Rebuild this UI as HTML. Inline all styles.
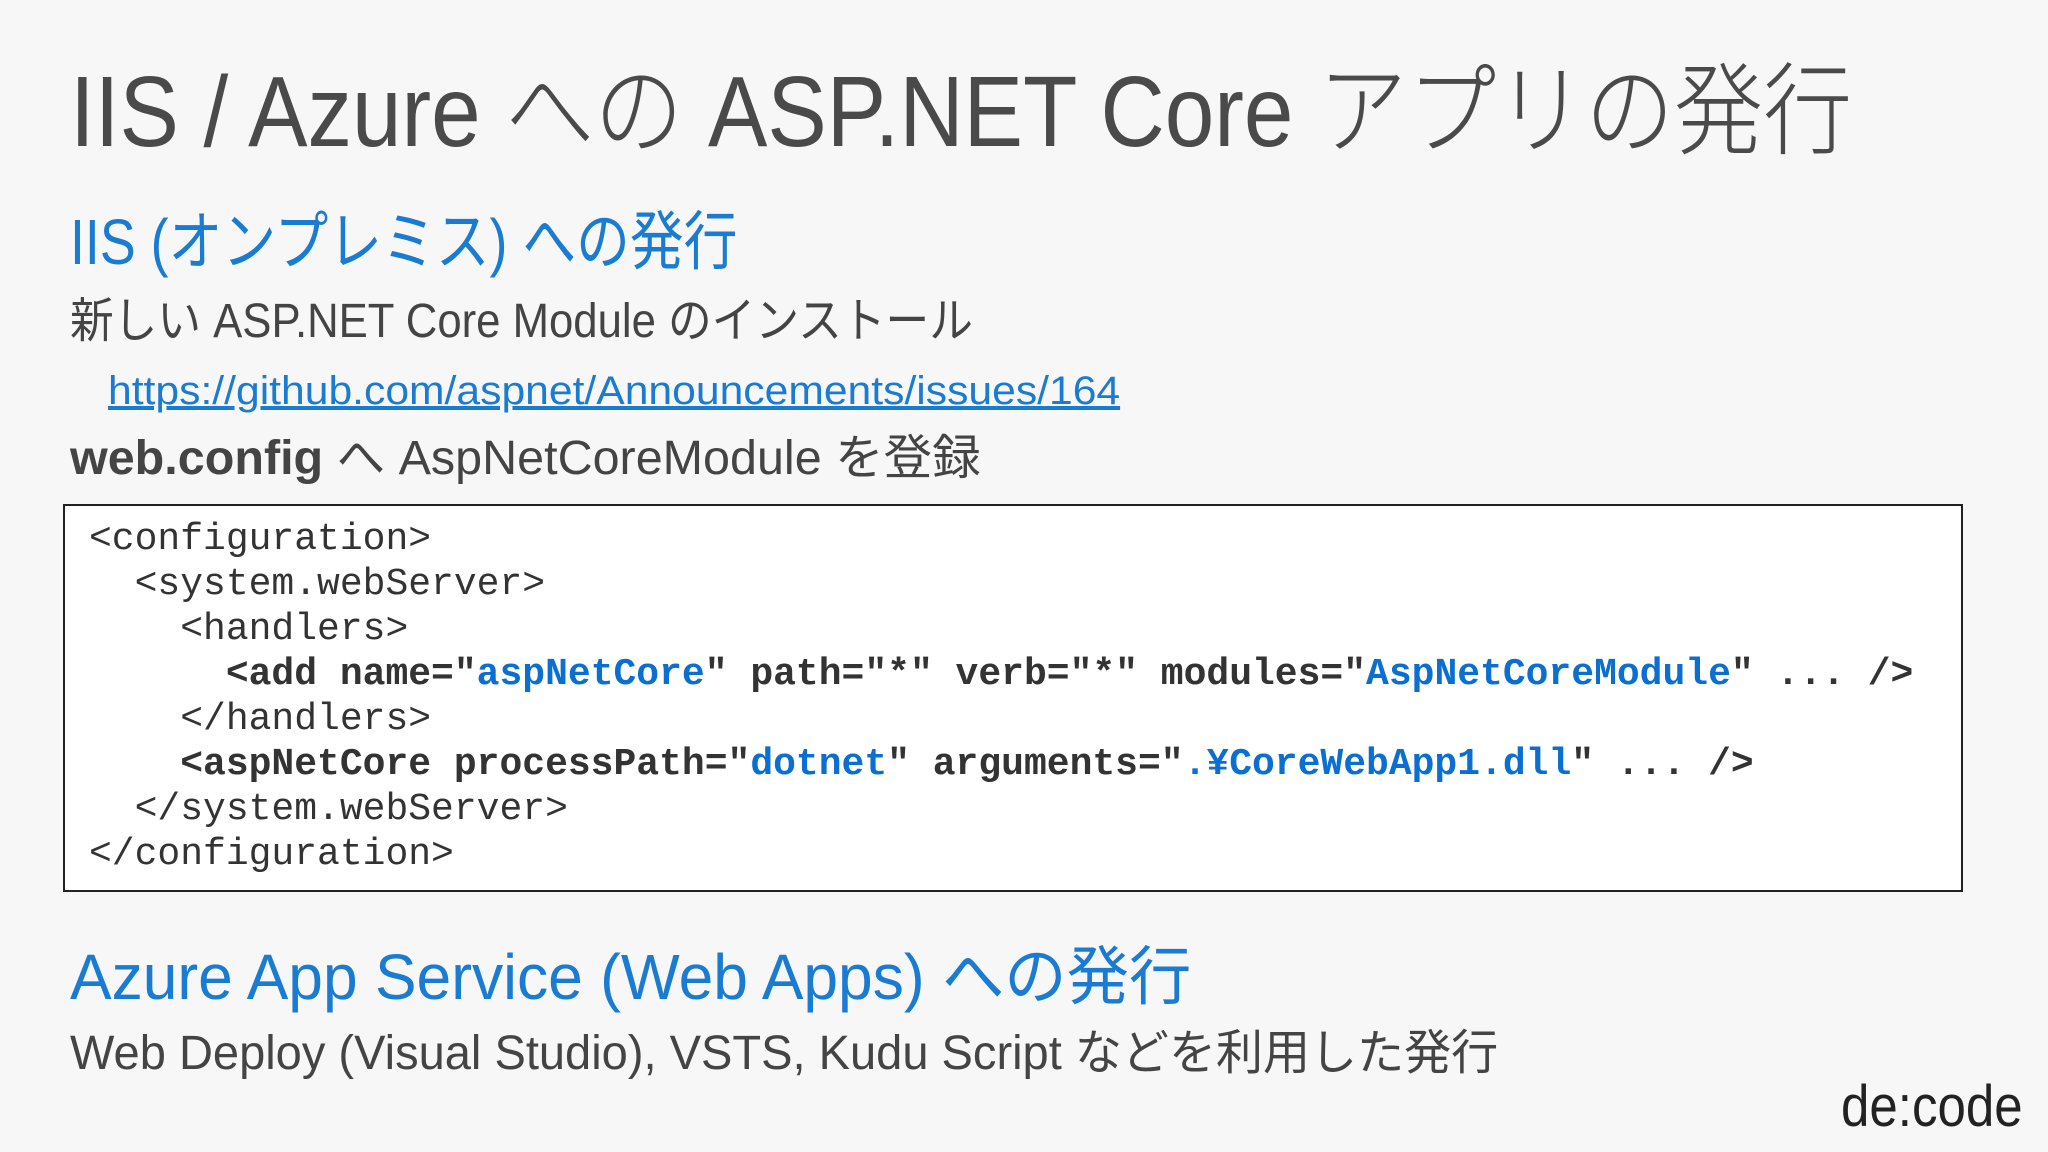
<!DOCTYPE html>
<html><head><meta charset="utf-8"><style>
body{margin:0;width:2048px;height:1152px;background:#f7f7f8;position:relative;overflow:hidden;font-family:"Liberation Sans","Noto Sans CJK JP",sans-serif;color:#444}
.a{position:absolute;white-space:nowrap;line-height:1;transform-origin:left center}
.t{left:70px;top:62px;font-size:100px;font-weight:300;color:#4a4a4a;transform:scaleX(0.89)}
.h{color:#1a7bd2;font-size:64px}
.p{font-size:48px;color:#444}
.box{position:absolute;left:63px;top:504px;width:1896px;height:384px;border:2px solid #222;background:#fff}
.c{position:absolute;left:24px;font-family:"Liberation Mono","Noto Sans CJK JP",monospace;font-size:38px;color:#333;white-space:pre;line-height:1}
.b{font-weight:bold}
.k{color:#0a6fd0;font-weight:bold}
</style></head><body>
<div class="a t">IIS / Azure への ASP.NET Core アプリの発行</div>
<div class="a h" style="left:70px;top:210px;transform:scaleX(0.84)">IIS (オンプレミス) への発行</div>
<div class="a p" style="left:70px;top:298px;transform:scaleX(0.91)">新しい ASP.NET Core Module のインストール</div>
<div class="a" style="left:108px;top:371px;font-size:40px;color:#1a7bd2;text-decoration:underline;transform:scaleX(1.066)">https://github.com/aspnet/Announcements/issues/164</div>
<div class="a p" style="left:70px;top:435px;transform:scaleX(1.01)"><b>web.config</b> へ AspNetCoreModule を登録</div>
<div class="box">
<div class="c" style="top:15px">&lt;configuration&gt;</div>
<div class="c" style="top:60px">  &lt;system.webServer&gt;</div>
<div class="c" style="top:105px">    &lt;handlers&gt;</div>
<div class="c b" style="top:150px">      &lt;add name="<span class="k">aspNetCore</span>" path="*" verb="*" modules="<span class="k">AspNetCoreModule</span>" ... /&gt;</div>
<div class="c" style="top:195px">    &lt;/handlers&gt;</div>
<div class="c b" style="top:240px">    &lt;aspNetCore processPath="<span class="k">dotnet</span>" arguments="<span class="k">.¥CoreWebApp1.dll</span>" ... /&gt;</div>
<div class="c" style="top:285px">  &lt;/system.webServer&gt;</div>
<div class="c" style="top:330px">&lt;/configuration&gt;</div>
</div>
<div class="a h" style="left:70px;top:945px;transform:scaleX(0.974)">Azure App Service (Web Apps) への発行</div>
<div class="a p" style="left:70px;top:1030px;transform:scaleX(0.98)">Web Deploy (Visual Studio), VSTS, Kudu Script などを利用した発行</div>
<div class="a" style="left:1841px;top:1078px;font-size:58px;color:#222;font-weight:300;transform:scaleX(0.88)">de:code</div>
</body></html>
